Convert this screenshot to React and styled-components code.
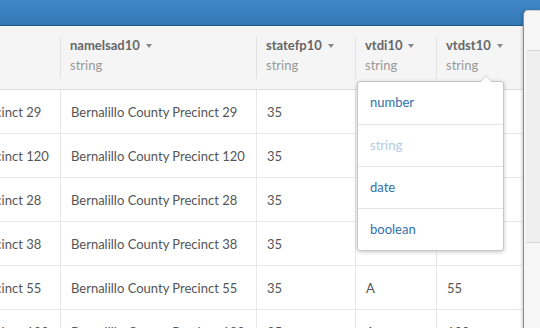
import React from 'react'
import styled, { createGlobalStyle } from 'styled-components'

const GlobalStyle = createGlobalStyle`
  html, body {
    margin: 0;
    padding: 0;
    background: #fff;
    overflow: hidden;
  }
  body {
    font-family: Lato, "Open Sans", "Liberation Sans", sans-serif;
    font-size: 13px;
    color: #555;
  }
`

const columns = [
  { key: 'name10', width: 196 },
  { key: 'namelsad10', width: 196 },
  { key: 'statefp10', width: 99 },
  { key: 'vtdi10', width: 81 },
  { key: 'vtdst10', width: 87 },
  { key: 'countyfp10', width: 120 },
]

const rows = [
  ['29', 'A'],
  ['120', 'A'],
  ['28', 'A'],
  ['38', 'A'],
  ['55', 'A'],
  ['100', 'A'],
].map(([n, v]) => [
  `Bernalillo County Precinct ${n}`,
  `Bernalillo County Precinct ${n}`,
  '35',
  v,
  n,
  '001',
])

const Page = styled.div`
  position: relative;
  width: 540px;
  height: 328px;
  overflow: hidden;
`

const TopBar = styled.div`
  height: 25px;
  background: linear-gradient(#4087c8, #3478b7);
  border-bottom: 1px solid #245684;
`

const Table = styled.div`
  margin-left: -136px;
  width: 800px;
`

const HeaderRow = styled.div`
  display: flex;
  height: 63px;
  background: #f5f5f5;
  border-bottom: 1px solid #dcdcdc;
`

const HeaderCell = styled.div`
  position: relative;
  flex: 0 0 ${p => p.$width}px;
  box-sizing: border-box;
  padding: 9px 10px 0;

  &::before {
    content: '';
    position: absolute;
    left: 0;
    top: 11px;
    bottom: 10px;
    border-left: 1px solid #e2e2e2;
  }
`

const ColName = styled.div`
  display: flex;
  align-items: center;
  gap: 6px;
  height: 20px;
  font-weight: 700;
  color: #666;
`

const Caret = styled.span`
  width: 0;
  height: 0;
  margin-top: 1px;
  border-left: 3.5px solid transparent;
  border-right: 3.5px solid transparent;
  border-top: 4px solid #888;
`

const ColType = styled.div`
  height: 20px;
  line-height: 20px;
  color: #999;
`

const Row = styled.div`
  display: flex;
  height: 43px;
  border-bottom: 1px solid #e8e8e8;
`

const Cell = styled.div`
  flex: 0 0 ${p => p.$width}px;
  box-sizing: border-box;
  padding: 0 10px;
  border-left: 1px solid #e8e8e8;
  line-height: 44px;
  white-space: nowrap;
  overflow: hidden;
`

const Menu = styled.div`
  position: absolute;
  top: 55px;
  right: 19px;
  width: 147px;
  box-sizing: border-box;
  background: #fff;
  border: 1px solid #c6c6c6;
  border-radius: 3px;
  box-shadow: 0 1px 4px rgba(0, 0, 0, 0.22);
  z-index: 2;

  &::before,
  &::after {
    content: '';
    position: absolute;
    right: 11px;
    border-left: 6px solid transparent;
    border-right: 6px solid transparent;
  }
  &::before {
    top: -7px;
    border-bottom: 7px solid #c6c6c6;
  }
  &::after {
    top: -6px;
    border-bottom: 7px solid #fff;
  }
`

const MenuItem = styled.div`
  height: 41px;
  line-height: 40px;
  padding: 0 12px;
  font-size: 13px;
  color: ${p => (p.$disabled ? '#b5cbe2' : '#2f70ae')};
  border-top: 1px solid #e6e6e6;

  &:first-child {
    border-top: none;
    height: 42px;
    line-height: 41px;
  }
`

const SidePanel = styled.div`
  position: absolute;
  top: 10px;
  left: 523px;
  right: 0;
  bottom: 0;
  background: #f6f6f6;
  border-left: 1px solid #8c8c8c;
  border-top: 1px solid #d0d0d0;
  border-top-left-radius: 5px;
  box-shadow: -1px 0 3px rgba(0, 0, 0, 0.2);
  z-index: 3;
`

const PanelHead = styled.div`
  height: 39px;
`

const PanelBody = styled.div`
  margin-left: 2px;
  height: 191px;
  background: #efefef;
  border-top: 1px solid #d6d6d6;
  border-bottom: 1px solid #d6d6d6;
  border-top-left-radius: 4px;
`

const types = ['number', 'string', 'date', 'boolean']

export default function App() {
  return (
    <Page>
      <GlobalStyle />
      <TopBar />
      <Table>
        <HeaderRow>
          {columns.map(col => (
            <HeaderCell key={col.key} $width={col.width}>
              <ColName>
                {col.key}
                <Caret />
              </ColName>
              <ColType>string</ColType>
              {col.key === 'vtdst10' && (
                <Menu>
                  {types.map(t => (
                    <MenuItem key={t} $disabled={t === 'string'}>
                      {t}
                    </MenuItem>
                  ))}
                </Menu>
              )}
            </HeaderCell>
          ))}
        </HeaderRow>
        {rows.map((r, i) => (
          <Row key={i}>
            {r.map((v, j) => (
              <Cell key={j} $width={columns[j].width}>
                {v}
              </Cell>
            ))}
          </Row>
        ))}
      </Table>
      <SidePanel>
        <PanelHead />
        <PanelBody />
      </SidePanel>
    </Page>
  )
}
